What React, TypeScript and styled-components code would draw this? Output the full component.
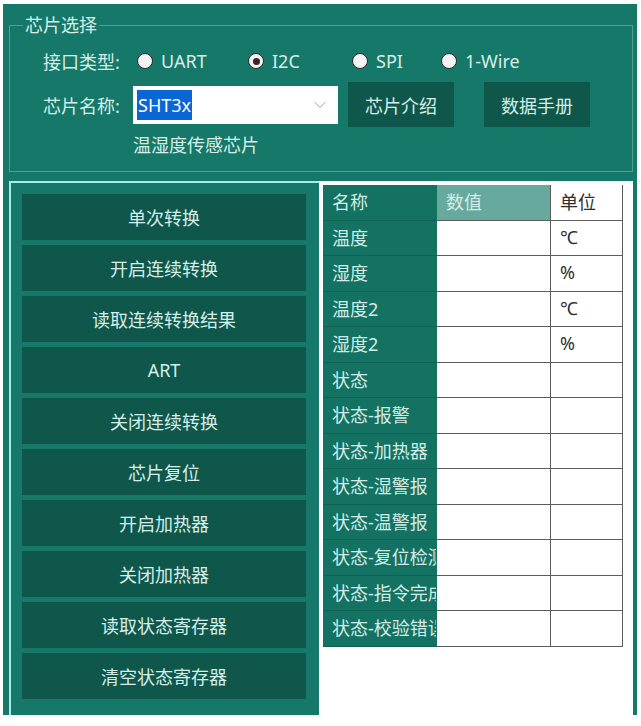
import React from 'react';
import styled, { createGlobalStyle } from 'styled-components';
import { ChevronDown } from 'lucide-react';

const GlobalStyle = createGlobalStyle`
  body {
    margin: 0;
    background: #ffffff;
    font-family: "Noto Sans", "Noto Sans CJK SC", sans-serif;
  }
`;

const TEAL = '#167868';
const DARK = '#0f574b';
const LIGHT_TEXT = '#d6eee8';

const Frame = styled.div`
  box-sizing: border-box;
  margin: 4px 0 0 3px;
  width: 634px;
  height: 711px;
  background: ${TEAL};
  display: flex;
  flex-direction: column;
  color: ${LIGHT_TEXT};
  font-size: 18px;
`;

const GroupBox = styled.fieldset`
  margin: 9px 4px 0 6px;
  border: 1px solid #4f9f92;
  padding: 0 0 14px 33px;
  min-width: 0;
  display: flex;
  flex-direction: column;
`;

const Legend = styled.legend`
  margin-left: -20px;
  padding: 0 2px;
  line-height: 24px;
  font-size: 18px;
  color: ${LIGHT_TEXT};
`;

const Row = styled.div<{ $top: number; $height: number }>`
  display: flex;
  align-items: center;
  margin-top: ${(p) => p.$top}px;
  height: ${(p) => p.$height}px;
`;

const Label = styled.span`
  width: 90px;
  flex-shrink: 0;
  white-space: nowrap;
`;

const RadioItem = styled.label<{ $width?: number }>`
  display: flex;
  align-items: center;
  gap: 8px;
  width: ${(p) => (p.$width ? `${p.$width}px` : 'auto')};
  font-size: 18px;
`;

const RadioCircle = styled.span<{ $checked?: boolean }>`
  box-sizing: border-box;
  width: 16px;
  height: 16px;
  border-radius: 50%;
  background: #f4f4f4;
  border: 1.5px solid #2b2b2b;
  display: flex;
  align-items: center;
  justify-content: center;
  &::after {
    content: '';
    display: ${(p) => (p.$checked ? 'block' : 'none')};
    width: 7px;
    height: 7px;
    border-radius: 50%;
    background: #3a2626;
  }
`;

const RadioGroup = styled.div`
  display: flex;
  align-items: center;
  margin-left: 4px;
`;

const ComboBox = styled.div`
  box-sizing: border-box;
  width: 205px;
  height: 38px;
  background: #ffffff;
  display: flex;
  align-items: center;
  justify-content: space-between;
  padding: 0 8px 0 4px;
`;

const Selected = styled.span`
  background: #0a66d4;
  color: #ffffff;
  font-size: 18px;
  line-height: 30px;
  padding: 0 1px;
`;

const ActionButton = styled.button<{ $ml: number }>`
  margin-left: ${(p) => p.$ml}px;
  width: 106px;
  height: 45px;
  border: none;
  background: ${DARK};
  color: ${LIGHT_TEXT};
  font-family: inherit;
  font-size: 18px;
  padding: 0;
`;

const Description = styled.div`
  margin-top: 6px;
  height: 24px;
  line-height: 24px;
  padding-left: 90px;
`;

const Bottom = styled.div`
  flex: 1;
  display: flex;
  margin: 9px 4px 0 6px;
  min-height: 0;
`;

const CommandPanel = styled.div`
  box-sizing: border-box;
  width: 310px;
  border-top: 2px solid #a6ede4;
  border-left: 2px solid #a6ede4;
  padding: 11px 13px 0 11px;
  display: flex;
  flex-direction: column;
  gap: 5px;
`;

const CommandButton = styled.button`
  height: 46px;
  flex-shrink: 0;
  border: none;
  background: ${DARK};
  color: ${LIGHT_TEXT};
  font-family: inherit;
  font-size: 18px;
  padding: 0;
`;

const DataPanel = styled.div`
  flex: 1;
  background: #ffffff;
  padding: 4px 0 0 4px;
`;

const Grid = styled.div`
  display: grid;
  grid-template-columns: 114px 114px 72px;
  grid-auto-rows: 35.5px;
  width: 300px;
`;

type CellKind = 'name' | 'head' | 'value' | 'unit';

const Cell = styled.div<{ $kind: CellKind }>`
  box-sizing: border-box;
  display: flex;
  align-items: center;
  padding-left: 9px;
  padding-bottom: 2px;
  overflow: hidden;
  white-space: nowrap;
  font-size: 18px;
  background: ${(p) =>
    p.$kind === 'name' ? '#137262' : p.$kind === 'head' ? '#68a99e' : '#ffffff'};
  color: ${(p) => (p.$kind === 'unit' ? '#2e2e2e' : '#d3ece6')};
  border-bottom: 1px solid ${(p) => (p.$kind === 'name' ? '#0e6153' : '#5c5c5c')};
  border-right: 1px solid ${(p) => (p.$kind === 'name' ? '#137262' : '#5c5c5c')};
`;

const commands = [
  '单次转换',
  '开启连续转换',
  '读取连续转换结果',
  'ART',
  '关闭连续转换',
  '芯片复位',
  '开启加热器',
  '关闭加热器',
  '读取状态寄存器',
  '清空状态寄存器',
];

const rows = [
  { name: '温度', unit: '℃' },
  { name: '湿度', unit: '%' },
  { name: '温度2', unit: '℃' },
  { name: '湿度2', unit: '%' },
  { name: '状态', unit: '' },
  { name: '状态-报警', unit: '' },
  { name: '状态-加热器', unit: '' },
  { name: '状态-湿警报', unit: '' },
  { name: '状态-温警报', unit: '' },
  { name: '状态-复位检测', unit: '' },
  { name: '状态-指令完成', unit: '' },
  { name: '状态-校验错误', unit: '' },
];

const interfaces = [
  { label: 'UART', width: 111, checked: false },
  { label: 'I2C', width: 104, checked: true },
  { label: 'SPI', width: 89, checked: false },
  { label: '1-Wire', width: 0, checked: false },
];

function App() {
  return (
    <>
      <GlobalStyle />
      <Frame>
        <GroupBox>
          <Legend>芯片选择</Legend>
          <Row $top={10} $height={28}>
            <Label>接口类型:</Label>
            <RadioGroup>
              {interfaces.map((it) => (
                <RadioItem key={it.label} $width={it.width || undefined}>
                  <RadioCircle $checked={it.checked} />
                  {it.label}
                </RadioItem>
              ))}
            </RadioGroup>
          </Row>
          <Row $top={7} $height={45}>
            <Label>芯片名称:</Label>
            <ComboBox>
              <Selected>SHT3x</Selected>
              <ChevronDown size={20} strokeWidth={1} color="#8a8a8a" />
            </ComboBox>
            <ActionButton $ml={10}>芯片介绍</ActionButton>
            <ActionButton $ml={30}>数据手册</ActionButton>
          </Row>
          <Description>温湿度传感芯片</Description>
        </GroupBox>
        <Bottom>
          <CommandPanel>
            {commands.map((c) => (
              <CommandButton key={c}>{c}</CommandButton>
            ))}
          </CommandPanel>
          <DataPanel>
            <Grid>
              <Cell $kind="name">名称</Cell>
              <Cell $kind="head">数值</Cell>
              <Cell $kind="unit">单位</Cell>
              {rows.map((r) => (
                <React.Fragment key={r.name}>
                  <Cell $kind="name">{r.name}</Cell>
                  <Cell $kind="value" />
                  <Cell $kind="unit">{r.unit}</Cell>
                </React.Fragment>
              ))}
            </Grid>
          </DataPanel>
        </Bottom>
      </Frame>
    </>
  );
}

export default App;
